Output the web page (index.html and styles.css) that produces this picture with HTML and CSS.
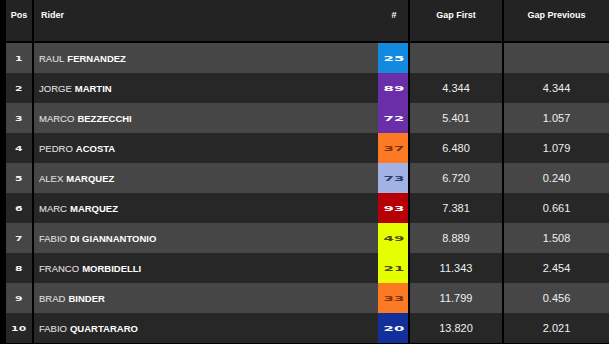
FILE: index.html
```html
<!DOCTYPE html>
<html>
<head>
<meta charset="utf-8">
<link rel="stylesheet" href="styles.css">
</head>
<body>
<div class="board">
  <div class="row head">
    <div class="c pos">Pos</div>
    <div class="c rider">Rider</div>
    <div class="c num">#</div>
    <div class="c gap">Gap First</div>
    <div class="c gap last">Gap Previous</div>
  </div>
  <div class="row light">
    <div class="c pos"><span class="wide">1</span></div>
    <div class="c rider">RAUL <b>FERNANDEZ</b></div>
    <div class="c num n-blue"><span class="wide">25</span></div>
    <div class="c gap"></div>
    <div class="c gap last"></div>
  </div>
  <div class="row dark">
    <div class="c pos"><span class="wide">2</span></div>
    <div class="c rider">JORGE <b>MARTIN</b></div>
    <div class="c num n-purple"><span class="wide">89</span></div>
    <div class="c gap">4.344</div>
    <div class="c gap last">4.344</div>
  </div>
  <div class="row light">
    <div class="c pos"><span class="wide">3</span></div>
    <div class="c rider">MARCO <b>BEZZECCHI</b></div>
    <div class="c num n-purple"><span class="wide">72</span></div>
    <div class="c gap">5.401</div>
    <div class="c gap last">1.057</div>
  </div>
  <div class="row dark">
    <div class="c pos"><span class="wide">4</span></div>
    <div class="c rider">PEDRO <b>ACOSTA</b></div>
    <div class="c num n-orange"><span class="wide">37</span></div>
    <div class="c gap">6.480</div>
    <div class="c gap last">1.079</div>
  </div>
  <div class="row light">
    <div class="c pos"><span class="wide">5</span></div>
    <div class="c rider">ALEX <b>MARQUEZ</b></div>
    <div class="c num n-lilac"><span class="wide">73</span></div>
    <div class="c gap">6.720</div>
    <div class="c gap last">0.240</div>
  </div>
  <div class="row dark">
    <div class="c pos"><span class="wide">6</span></div>
    <div class="c rider">MARC <b>MARQUEZ</b></div>
    <div class="c num n-red"><span class="wide">93</span></div>
    <div class="c gap">7.381</div>
    <div class="c gap last">0.661</div>
  </div>
  <div class="row light">
    <div class="c pos"><span class="wide">7</span></div>
    <div class="c rider">FABIO <b>DI GIANNANTONIO</b></div>
    <div class="c num n-yellow"><span class="wide">49</span></div>
    <div class="c gap">8.889</div>
    <div class="c gap last">1.508</div>
  </div>
  <div class="row dark">
    <div class="c pos"><span class="wide">8</span></div>
    <div class="c rider">FRANCO <b>MORBIDELLI</b></div>
    <div class="c num n-yellow"><span class="wide">21</span></div>
    <div class="c gap">11.343</div>
    <div class="c gap last">2.454</div>
  </div>
  <div class="row light">
    <div class="c pos"><span class="wide">9</span></div>
    <div class="c rider">BRAD <b>BINDER</b></div>
    <div class="c num n-orange"><span class="wide">33</span></div>
    <div class="c gap">11.799</div>
    <div class="c gap last">0.456</div>
  </div>
  <div class="row dark">
    <div class="c pos"><span class="wide">10</span></div>
    <div class="c rider">FABIO <b>QUARTARARO</b></div>
    <div class="c num n-navy"><span class="wide">20</span></div>
    <div class="c gap">13.820</div>
    <div class="c gap last">2.021</div>
  </div>
</div>
</body>
</html>
```

FILE: styles.css
```css
html, body {
  margin: 0;
  padding: 0;
  background: #000;
  width: 609px;
  height: 344px;
  overflow: hidden;
}
.board {
  padding-left: 6px;
  font-family: "Liberation Sans", Arial, sans-serif;
  color: #e6e6e6;
}
.row {
  display: grid;
  grid-template-columns: 26px 346px 30px 94px 107px;
  height: 30px;
}
.row.head {
  height: 41px;
  border-bottom: 2px solid #000;
  background: #232323;
}
.row.light { background: #464646; }
.row.dark { background: #272727; }
.c {
  display: flex;
  align-items: center;
  justify-content: center;
  font-size: 9.5px;
  box-sizing: border-box;
  white-space: nowrap;
}
.rider {
  border-left: 2px solid #000;
  justify-content: flex-start;
  padding-left: 5px;
  color: #dcdcdc;
  -webkit-text-stroke: 0.15px #dcdcdc;
}
.rider b {
  color: #fff;
  margin-left: 3px;
  -webkit-text-stroke: 0;
}
.gap {
  border-left: 2px solid #000;
  font-size: 11px;
  color: #f0f0f0;
}
.head .c {
  align-items: flex-start;
  padding-top: 10px;
  font-weight: 700;
  color: #fff;
  font-size: 9px;
  -webkit-text-stroke: 0;
}
.head .rider { padding-left: 7px; }
.head .num { padding-left: 2px; }
.wide {
  display: inline-block;
  font-family: "DejaVu Sans", sans-serif;
  font-weight: 700;
  font-size: 8px;
  transform: scale(1.35, 0.95);
  letter-spacing: 0.3px;
}
.pos .wide { color: #f2f2f2; }
.num .wide {
  margin-left: 2px;
  font-size: 8.5px;
  transform: scale(1.75, 0.85);
  letter-spacing: 0.2px;
}
.n-blue { background: #118ae0; color: #fff; }
.n-purple { background: #6a2ea8; color: #fff; }
.n-orange { background: #fb7a23; color: #7a3410; }
.n-lilac { background: #a2b2e4; color: #2d3b6d; }
.n-red { background: #b70006; color: #fff; }
.n-yellow { background: #e6ff00; color: #4a4a10; }
.n-navy { background: #13309a; color: #fff; }
```
